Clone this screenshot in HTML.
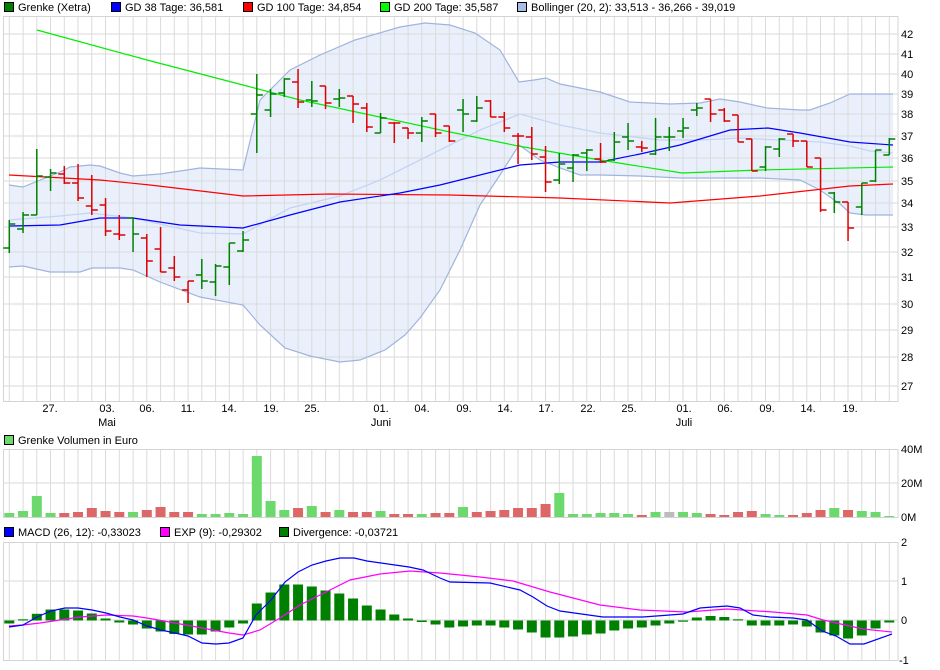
<!DOCTYPE html>
<html><head><meta charset="utf-8"><style>
html,body{margin:0;padding:0;background:#fff;width:940px;height:670px;overflow:hidden}
svg{display:block;font-family:"Liberation Sans",sans-serif;font-size:11px}
</style></head><body>
<svg id="s" width="940" height="670" xmlns="http://www.w3.org/2000/svg"></svg>
<script>
var S=document.getElementById('s'),h='';
function X(i){return 9.3+13.75*i;}
function pl(pts,c,w,o){return '<polyline fill="none" stroke="'+c+'" stroke-width="'+(w||1)+'" stroke-opacity="'+(o||1)+'" points="'+pts.map(function(p){return p.join(',')}).join(' ')+'"/>';}
function grid(y0,y1,hs){var g='';for(var i=0;i<65;i++){var x=X(i).toFixed(1);g+='<line x1="'+x+'" y1="'+y0+'" x2="'+x+'" y2="'+y1+'" stroke="#dadada"/>';}
hs.forEach(function(y){g+='<line x1="3" y1="'+y+'" x2="898" y2="'+y+'" stroke="#dadada"/>';});
g+='<rect x="3.5" y="'+(y0+0.5)+'" width="894.5" height="'+(y1-y0)+'" fill="none" stroke="#d4d4d4"/>';return g;}
// legends
function leg(x,y,c,t){return '<rect x="'+(x+0.5)+'" y="'+(y-8.5)+'" width="9" height="9" fill="'+c+'" stroke="#000"/><text x="'+(x+14)+'" y="'+y+'" fill="#000">'+t+'</text>';}
h+=leg(4,11,'#008000','Grenke (Xetra)')+leg(111,11,'#0000ff','GD 38 Tage: 36,581')+leg(243,11,'#ff0000','GD 100 Tage: 34,854')+leg(380,11,'#00ff00','GD 200 Tage: 35,587')+leg(517,11,'#a8bce8','Bollinger (20, 2): 33,513 - 36,266 - 39,019');
h+=leg(4,444,'#6bd96b','Grenke Volumen in Euro');
h+=leg(4,536,'#0000ff','MACD (26, 12): -0,33023')+leg(160,536,'#ff00ff','EXP (9): -0,29302')+leg(279,536,'#008000','Divergence: -0,03721');
// price grid
var py={42:34,41:54,40:74,39:94,38:114,37:136,36:158,35:181,34:203,33:227,32:252,31:277,30:304,29:330,28:357,27:386};
var hs=[];for(var k in py)hs.push(py[k]);
// bollinger
var up=[[9,185],[23,187],[60,172],[70,167],[90,165],[100,166],[120,173],[133,176],[160,174],[200,168],[243,170],[260,100],[290,70],[320,55],[355,40],[400,27],[425,23],[450,25],[475,33],[500,50],[519,82],[534,80],[546,78],[560,84],[600,92],[630,102],[670,104],[700,103],[720,99],[740,102],[767,108],[800,110],[810,110],[830,103],[850,94],[893,94]];
var lo=[[9,267],[23,266],[50,272],[80,272],[92,268],[120,268],[133,270],[160,282],[200,297],[243,305],[260,325],[285,348],[310,356],[340,362],[360,360],[385,350],[405,335],[420,318],[440,290],[460,250],[480,205],[500,175],[519,145],[540,160],[560,168],[580,175],[600,175],[640,176],[680,178],[730,178],[760,178],[800,180],[820,190],[840,204],[850,213],[866,215],[893,215]];
var band=up.concat(lo.slice().reverse());
h+='<polygon fill="#e9f0fc" points="'+band.map(function(p){return p.join(',')}).join(' ')+'"/>';
h+=grid(16,401,hs);
h+=pl(up,'#a0b4dc',1.2)+pl(lo,'#a0b4dc',1.2);
h+=pl([[9,220],[60,216],[90,213],[133,218],[200,233],[243,234],[290,208],[340,196],[380,180],[420,160],[450,145],[480,130],[520,114],[560,125],[600,133],[660,140],[700,140],[740,138],[780,140],[820,142],[850,146],[870,151],[893,153]],'#c4d4f4',1.3);
h+=pl([[9,175],[100,180],[150,185],[243,196],[330,194],[450,195],[560,198],[670,203],[760,196],[850,186],[893,184]],'#ff0000',1.2);
h+=pl([[9,226],[60,225],[100,218],[133,218],[180,225],[243,228],[290,215],[340,202],[400,193],[440,185],[520,165],[560,162],[600,162],[640,154],[680,145],[730,130],[768,128],[800,133],[850,142],[893,145]],'#0000ff',1.2);
h+=pl([[37,30],[147,60],[243,85],[300,100],[450,132],[518,146],[600,160],[682,173],[760,170],[893,167]],'#00ee00',1.2);
// bars: hi,lo,open,close,g
var B=[[220,253,248,224,1],[212,233,229,215,1],[149,215,215,176,1],[169,191,177,173,1],[166,184,174,183,0],[164,201,183,198,0],[175,215,206,210,0],[198,236,205,231,0],[215,240,234,235,0],[218,252,218,234,1],[234,277,238,261,0],[227,272,249,272,0],[256,281,268,277,0],[281,303,290,281,0],[259,289,275,281,1],[264,296,282,266,1],[243,285,267,243,1],[231,252,251,240,1],[74,153,114,95,1],[89,117,110,94,1],[78,97,93,79,1],[69,108,82,102,0],[81,107,100,101,1],[86,109,86,103,0],[89,107,99,98,1],[96,123,96,104,0],[103,132,108,127,0],[113,133,133,118,1],[122,143,123,123,0],[128,139,128,133,0],[117,142,133,121,1],[114,137,114,133,0],[126,142,126,141,0],[99,132,110,114,1],[96,122,121,108,1],[100,117,101,117,0],[112,132,117,128,0],[133,164,136,136,0],[127,160,137,154,0],[146,192,157,182,0],[153,184,180,164,1],[154,182,168,155,1],[149,171,153,150,1],[143,163,159,162,0],[132,161,160,142,1],[123,150,137,141,1],[141,152,147,148,0],[118,155,154,137,1],[127,151,137,137,1],[118,138,131,128,1],[103,116,110,108,1],[99,122,99,114,0],[108,122,110,121,0],[115,142,115,142,0],[139,171,139,171,0],[146,171,167,147,1],[138,157,149,139,1],[134,147,134,141,0],[141,167,141,167,0],[158,212,158,210,0],[192,213,193,202,1],[202,241,202,228,0],[183,215,207,183,1],[150,182,181,150,1],[138,155,155,139,1]];
B.forEach(function(b,i){var x=X(i),c=b[4]?'#008000':'#dd0000';
h+='<g stroke="'+c+'" stroke-width="1.5"><line x1="'+x+'" y1="'+b[0]+'" x2="'+x+'" y2="'+b[1]+'"/><line x1="'+(x-6)+'" y1="'+b[2]+'" x2="'+x+'" y2="'+b[2]+'"/><line x1="'+x+'" y1="'+b[3]+'" x2="'+(x+6)+'" y2="'+b[3]+'"/></g>';});
for(var k in py)h+='<text x="901" y="'+(py[k]+4)+'" fill="#000">'+k+'</text>';
// x labels
[[50,'27.'],[107,'03.','Mai'],[147,'06.'],[188,'11.'],[229,'14.'],[271,'19.'],[312,'25.'],[381,'01.','Juni'],[422,'04.'],[464,'09.'],[505,'14.'],[546,'17.'],[588,'22.'],[629,'25.'],[684,'01.','Juli'],[725,'06.'],[767,'09.'],[808,'14.'],[850,'19.']].forEach(function(l){
h+='<text x="'+l[0]+'" y="412" text-anchor="middle" fill="#000">'+l[1]+'</text>';if(l[2])h+='<text x="'+l[0]+'" y="426" text-anchor="middle" fill="#000">'+l[2]+'</text>';});
// volume
h+=grid(449,517,[483]);
var V=[[513,1],[511,1],[496,1],[513,1],[513,0],[512,0],[508,0],[511,0],[512,0],[512,1],[510,0],[507,0],[512,0],[512,0],[514,1],[514,1],[513,1],[514,1],[456,1],[501,1],[510,1],[508,0],[506,1],[512,0],[510,1],[512,0],[512,0],[511,1],[514,0],[514,0],[514,1],[513,0],[513,0],[507,1],[512,0],[511,0],[510,0],[508,0],[508,0],[504,0],[493,1],[514,1],[514,1],[513,1],[513,1],[514,1],[515,0],[512,1],[512,2],[512,1],[513,1],[514,0],[515,0],[512,0],[511,0],[514,1],[515,1],[515,0],[513,0],[510,0],[508,1],[510,0],[511,1],[512,1],[516,1]];
V.forEach(function(v,i){var c=v[1]==1?'#6bd96b':v[1]==2?'#bbbbbb':'#dd6666';h+='<rect x="'+(X(i)-5)+'" y="'+v[0]+'" width="10" height="'+(517-v[0])+'" fill="'+c+'"/>';});
h+='<text x="901" y="453" fill="#000">40M</text><text x="901" y="487" fill="#000">20M</text><text x="901" y="521" fill="#000">0M</text>';
// macd
h+=grid(542,660,[581,620]);
var D=[-3,0.6,6.7,11,11,10,7,2,-2,-4,-8,-11,-13.5,-14,-14,-11,-7,-3,17,28,36,36,34,30,27,22,15,11,6,2,-1.5,-4,-7,-6,-5,-5,-7,-9,-12,-17,-17,-16,-14,-13,-10,-8,-7,-5,-3,-1,3,4.5,3.5,0.6,-5,-5,-5,-4,-6,-12,-15,-18,-15,-8,-2];
D.forEach(function(d,i){var z=620.5,y=d>0?z-d:z,hh=Math.max(1.2,Math.abs(d));h+='<rect x="'+(X(i)-5)+'" y="'+(d>0?z-hh:z)+'" width="10" height="'+hh+'" fill="#008000"/>';});
h+=pl([[9,626],[23,625],[40,623],[60,620],[80,617],[106,615],[133,616],[147,618],[175,623],[202,628],[229,633],[243,635],[260,630],[280,618],[300,605],[330,590],[350,580],[380,574],[410,571],[440,573],[480,577],[513,581],[550,592],[600,605],[640,610],[687,612],[727,609],[773,612],[807,615],[823,620],[863,629],[892,632]],'#ff00ff',1.2);
h+=pl([[9,627],[23,625],[37,617],[51,611],[65,608],[78,608],[92,610],[106,613],[120,617],[133,620],[147,626],[161,630],[175,633],[188,636],[202,643],[216,644],[229,643],[243,638],[256,615],[271,600],[285,582],[298,572],[312,565],[326,561],[340,558],[354,558],[367,561],[381,563],[395,565],[409,567],[423,570],[440,578],[450,582],[490,583],[520,590],[533,597],[547,606],[560,611],[603,617],[643,617],[683,614],[700,608],[713,607],[727,606],[740,608],[753,615],[770,617],[793,618],[807,620],[822,631],[836,636],[850,644],[864,644],[892,634]],'#0000ff',1.2);
h+='<text x="901" y="546" fill="#000">2</text><text x="901" y="585" fill="#000">1</text><text x="901" y="624" fill="#000">0</text><text x="899" y="664" fill="#000">-1</text>';
S.innerHTML=h;
</script>
</body></html>
